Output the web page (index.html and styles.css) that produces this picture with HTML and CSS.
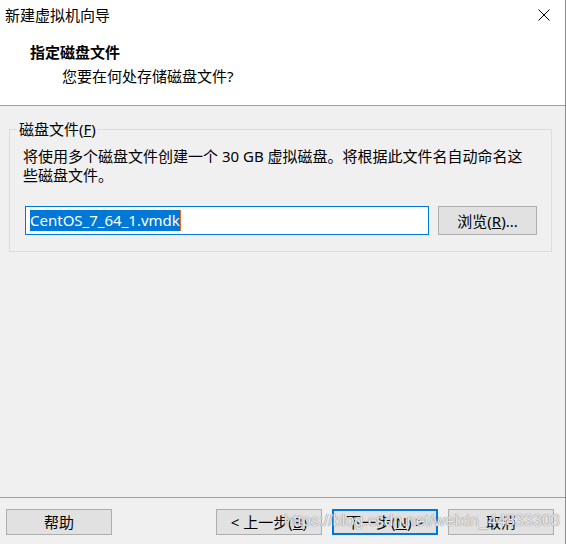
FILE: index.html
```html
<!DOCTYPE html>
<html lang="zh-CN">
<head>
    <meta charset="UTF-8">
    <title>新建虚拟机向导</title>
    <link rel="stylesheet" href="styles.css">
</head>
<body>
    <div class="window">
        <div class="titlebar">
            <span class="title">新建虚拟机向导</span>
            <span class="close">
                <svg width="12" height="12" viewBox="0 0 12 12">
                    <path d="M0.5 0.5 L11.5 11.5 M11.5 0.5 L0.5 11.5" stroke="#000" stroke-width="1" fill="none"/>
                </svg>
            </span>
        </div>
        <div class="header">
            <p class="step-title">指定磁盘文件</p>
            <p class="step-sub">您要在何处存储磁盘文件?</p>
        </div>
        <div class="content">
            <fieldset class="group">
                <legend>磁盘文件(<u>F</u>)</legend>
                <p class="desc">将使用多个磁盘文件创建一个 30 GB 虚拟磁盘。将根据此文件名自动命名这些磁盘文件。</p>
                <div class="file-row">
                    <div class="textbox"><span class="selected">CentOS_7_64_1.vmdk</span><span class="caret"></span></div>
                    <div class="btn browse">浏览(<u>R</u>)...</div>
                </div>
            </fieldset>
        </div>
        <div class="footer">
            <div class="btn">帮助</div>
            <div class="nav">
                <div class="btn">&lt; 上一步(<u>B</u>)</div>
                <div class="btn focused">下一步(<u>N</u>) &gt;</div>
                <div class="btn">取消</div>
            </div>
        </div>
        <div class="watermark">https://blog.csdn.net/weixin_44833303</div>
    </div>
</body>
</html>
```

FILE: styles.css
```css
* {
    margin: 0;
    padding: 0;
    box-sizing: border-box;
}
body {
    font-family: "Noto Sans", "Noto Sans CJK SC", sans-serif;
    font-size: 15px;
    color: #000;
    background-color: #f0f0f0;
}
.window {
    position: relative;
    width: 566px;
    height: 544px;
    display: flex;
    flex-direction: column;
    border-right: 1px solid #8c8c8c;
    overflow: hidden;
}
.titlebar {
    height: 30px;
    background-color: #fff;
    display: flex;
    align-items: center;
    justify-content: space-between;
    padding: 0 15px 0 5px;
}
.title {
    line-height: 20px;
}
.close {
    display: flex;
}
.header {
    height: 76px;
    background-color: #fff;
    border-bottom: 1px solid #a0a0a0;
    padding: 12px 0 0 30px;
}
.step-title {
    font-weight: bold;
    line-height: 20px;
}
.step-sub {
    line-height: 20px;
    margin: 4px 0 0 32px;
}
.content {
    flex: 1;
    padding: 13px 13px 0 9px;
}
.group {
    border: 1px solid #dcdcdc;
    padding: 0 13px 16px 13px;
    min-width: 0;
}
.group legend {
    line-height: 20px;
    padding: 0 2px;
    margin-left: -6px;
}
.desc {
    line-height: 19px;
    margin-top: 8px;
    padding-right: 14px;
}
.file-row {
    display: flex;
    align-items: center;
    gap: 9px;
    margin: 21px 0 0 2px;
}
.textbox {
    width: 404px;
    height: 29px;
    background-color: #fff;
    border: 1px solid #0078d7;
    display: flex;
    align-items: center;
    padding-left: 4px;
}
.selected {
    background-color: #0078d7;
    color: #fff;
    line-height: 21px;
}
.caret {
    width: 1px;
    height: 21px;
    background-color: #e07020;
}
.btn {
    width: 106px;
    height: 26px;
    background-color: #e1e1e1;
    border: 1px solid #adadad;
    display: flex;
    align-items: center;
    justify-content: center;
    line-height: 20px;
}
.browse {
    width: 99px;
    height: 29px;
}
.focused {
    border: 2px solid #0078d7;
}
.footer {
    height: 47px;
    border-top: 1px solid #a0a0a0;
    display: flex;
    justify-content: space-between;
    padding: 11px 11px 0 6px;
}
.nav {
    display: flex;
    gap: 10px;
}
.watermark {
    position: absolute;
    left: 284px;
    top: 512px;
    font-family: "Liberation Sans", sans-serif;
    font-size: 16px;
    letter-spacing: 0.1px;
    color: rgba(250, 250, 250, 0.85);
    text-shadow: 0 0 1px #8a8a8a, 0 0 1px #8a8a8a;
    white-space: nowrap;
    pointer-events: none;
}
```
